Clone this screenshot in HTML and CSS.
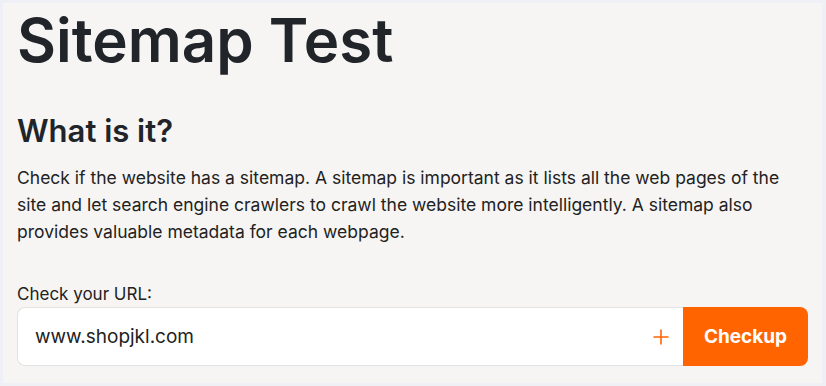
FILE: index.html
```html
<!DOCTYPE html>
<html lang="en">
  <head>
    <meta charset="UTF-8" />
    <title>Sitemap Test</title>
    <link rel="stylesheet" href="styles.css">
  </head>
  <body>
    <div class="tool-card">
      <h1>Sitemap Test</h1>

      <h2>What is it?</h2>
      <p class="description">
        Check if the website has a sitemap. A sitemap is important as it lists all the web pages of the
        site and let search engine crawlers to crawl the website more intelligently. A sitemap also
        provides valuable metadata for each webpage.
      </p>

      <label class="url-label" for="urlInput">Check your URL:</label>
      <div class="url-form">
        <div class="url-field">
          <input id="urlInput" type="text" value="www.shopjkl.com" />
          <svg class="plus-icon" width="16" height="16" viewBox="0 0 16 16" aria-hidden="true">
            <path d="M8 0.5V15.5M0.5 8H15.5" stroke="#ff6400" stroke-width="1.6" fill="none" />
          </svg>
        </div>
        <button class="checkup-btn">Checkup</button>
      </div>
    </div>
  </body>
</html>
```

FILE: styles.css
```css
html,
body {
  height: 100%;
}

body {
  font-family: "Inter", "Open Sans", sans-serif;
  margin: 0;
  padding: 3px 4px 3px 3px;
  box-sizing: border-box;
  background: #eef0f5;
  color: #212529;
}

.tool-card {
  background: #f6f5f4;
  padding: 0 14px 17px 14px;
  height: 100%;
  box-sizing: border-box;
}

h1 {
  font-size: 60px;
  font-weight: 600;
  margin: 0;
  padding-top: 2px;
  line-height: 70px;
}

h2 {
  font-size: 31px;
  font-weight: 600;
  margin: 36px 0 0;
  line-height: 40px;
}

p.description {
  font-size: 17.5px;
  line-height: 27px;
  margin: 13px 0 0;
  color: #222;
}

.url-label {
  display: block;
  font-size: 17px;
  line-height: 24px;
  margin-top: 37px;
  color: #222;
}

.url-form {
  display: flex;
  margin-top: 1px;
  height: 59px;
}

.url-field {
  flex: 1;
  display: flex;
  align-items: center;
  background: #fff;
  border: 1px solid #e2e2e2;
  border-right: none;
  border-radius: 8px 0 0 8px;
  padding: 0 14px 0 17px;
}

.url-field input {
  flex: 1;
  border: none;
  outline: none;
  background: transparent;
  font-family: inherit;
  font-size: 19px;
  color: #222;
  padding: 0;
}

.plus-icon {
  flex-shrink: 0;
}

.checkup-btn {
  width: 125px;
  background: #ff6400;
  color: #fff;
  border: none;
  border-radius: 0 8px 8px 0;
  font-family: inherit;
  font-size: 19px;
  font-weight: 700;
  cursor: pointer;
}
```
